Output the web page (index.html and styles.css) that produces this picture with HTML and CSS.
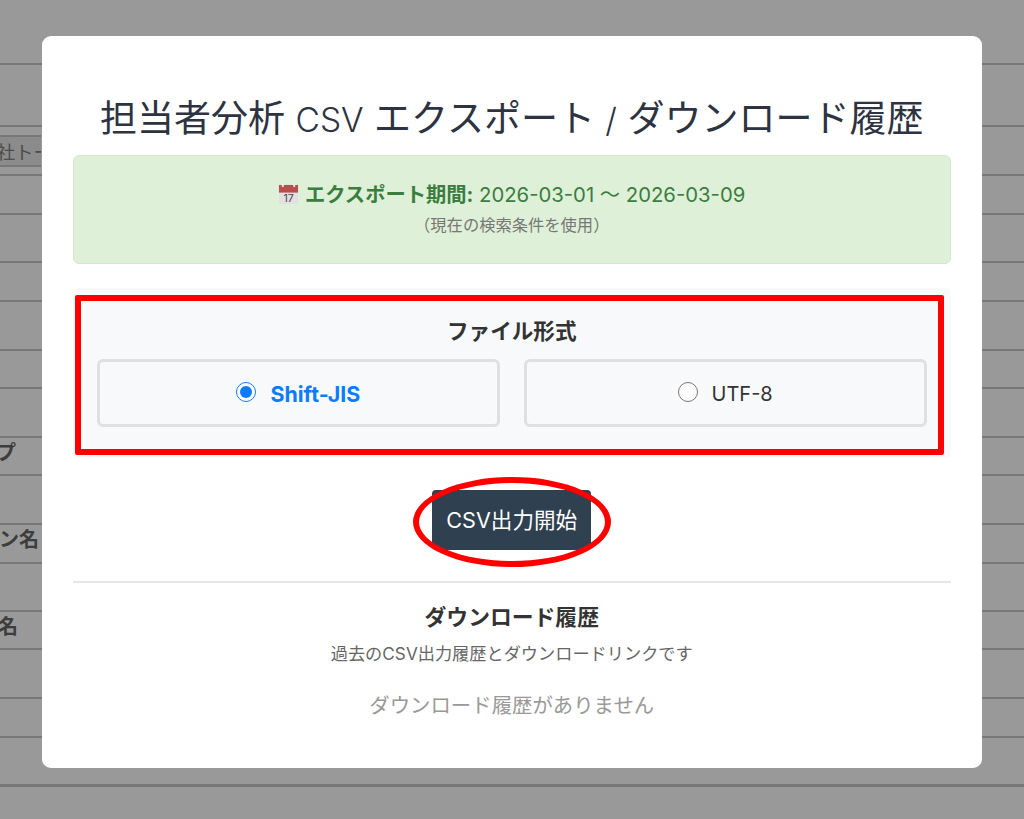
FILE: index.html
```html
<!DOCTYPE html>
<html lang="ja">
<head>
<meta charset="utf-8">
<title>担当者分析 CSV エクスポート</title>
<link rel="stylesheet" href="styles.css">
</head>
<body>
<main class="page">
  <div class="row h64"></div>
  <div class="row h62"></div>
  <div class="row h49"><div class="field"><span>社トー</span></div></div>
  <div class="row h39"></div>
  <div class="row h48"></div>
  <div class="row h39"></div>
  <div class="row h49"></div>
  <div class="row h38"></div>
  <div class="row h49"></div>
  <div class="row h38 label-row"><div class="label w15">プ</div></div>
  <div class="row h49"></div>
  <div class="row h39 label-row"><div class="label w38">ン名</div></div>
  <div class="row h48"></div>
  <div class="row h38 label-row"><div class="label w17">名</div></div>
  <div class="row h49"></div>
  <div class="row h39"></div>
  <div class="row h49 last"></div>
</main>
<div class="backdrop"></div>
<section class="modal">
  <h2 class="title">担当者分析 <span class="light">CSV</span> エクスポート <span class="light">/</span> ダウンロード履歴</h2>
  <div class="alert">
    <p class="period"><svg class="cal" viewBox="0 0 22 22" aria-hidden="true"><rect x="1" y="1" width="20" height="20" fill="#e2e0e0"/><rect x="1" y="1" width="20" height="8" fill="#b5504f"/><rect x="4" y="0" width="2" height="3" fill="#f4eeee"/><rect x="16" y="0" width="2" height="3" fill="#f4eeee"/><text x="11" y="19" class="cal-num" text-anchor="middle">17</text></svg> <strong>エクスポート期間:</strong> 2026-03-01 〜 2026-03-09</p>
    <p class="note">（現在の検索条件を使用）</p>
  </div>
  <div class="format">
    <h3 class="format-title">ファイル形式</h3>
    <div class="options">
      <label class="option selected"><input type="radio" name="enc" checked><span>Shift-JIS</span></label>
      <label class="option"><input type="radio" name="enc"><span>UTF-8</span></label>
    </div>
    <div class="mark-rect"></div>
  </div>
  <div class="action">
    <button class="start" type="button">CSV出力開始</button>
    <div class="mark-ellipse"></div>
  </div>
  <hr class="divider">
  <h3 class="history-title">ダウンロード履歴</h3>
  <p class="history-desc">過去のCSV出力履歴とダウンロードリンクです</p>
  <p class="history-empty">ダウンロード履歴がありません</p>
</section>
</body>
</html>
```

FILE: styles.css
```css
* { box-sizing: border-box; }
html, body { margin: 0; height: 100%; overflow: hidden; }
body {
  background: #fff;
  color: #2d3340;
  font-family: Inter, "Noto Sans CJK JP", sans-serif;
}
.row { border-bottom: 2px solid #c6c6c6; display: flex; align-items: center; }
.h64 { height: 65px; }
.h62 { height: 62px; }
.h49 { height: 49px; }
.h48 { height: 48px; }
.h39 { height: 39px; }
.h38 { height: 38px; }
.last { border-bottom-width: 3px; }
.field {
  width: 41px; height: 32px;
  display: flex; align-items: center; justify-content: flex-end;
  overflow: hidden;
  background: #e8e8e8;
  border-top: 2px solid #c6c6c6; border-bottom: 2px solid #c6c6c6;
  font-size: 18.5px; color: #808080;
  white-space: nowrap;
}
.field span { flex: none; margin-right: -11px; }
.label-row { font-size: 20px; font-weight: 700; color: #666; }
.label { display: flex; justify-content: flex-end; white-space: nowrap; margin-bottom: 10px; }
.w15 { width: 16px; }
.w38 { width: 39px; }
.w17 { width: 18px; }

.backdrop { position: fixed; inset: 0; background: rgba(0, 0, 0, .4); }
.modal {
  position: fixed;
  left: 41.5px; top: 36px; width: 940.5px; height: 732px;
  background: #fff;
  border-radius: 9px;
  padding: 58px 31.5px 0;
  text-align: center;
}
.title { height: 50px; margin: 0 0 11px; font-size: 37px; line-height: 50px; font-weight: 400; white-space: nowrap; }
.light { font-weight: 300; font-size: 33.5px; }
.alert {
  height: 109px;
  padding-top: 24px;
  background: #dff0d8;
  border: 1px solid #d0e9c6;
  border-radius: 6px;
  color: #3a7d3f;
}
.alert p { margin: 0; }
.period { font-size: 20.3px; line-height: 30px; }
.cal { width: 21px; height: 21px; vertical-align: -3px; }
.cal-num { font-size: 11px; fill: #444; font-family: Inter, sans-serif; }
.note { font-size: 16.3px; line-height: 30px; color: #777; }
.format {
  position: relative;
  height: 170px;
  margin-top: 24px;
  padding: 29px 24px 0;
  background: #f8f9fa;
  border-radius: 6px;
}
.format-title { margin: 0 0 14px; font-size: 21.6px; line-height: 28px; font-weight: 700; color: #333; }
.options { display: flex; gap: 24px; }
.option {
  flex: 1;
  height: 68px;
  display: flex; align-items: center; justify-content: center; gap: 14px;
  border: 3px solid #e0e0e0;
  border-radius: 6px;
  font-size: 20px;
  color: #333;
}
.option input { width: 20px; height: 20px; margin: 0 0 2px; accent-color: #0d7bff; }
.option span { margin-top: 2px; }
.selected { color: #0d7bff; font-weight: 700; font-size: 21.4px; }
.mark-rect {
  position: absolute;
  left: 2px; top: 7px; width: 869px; height: 160px;
  border: 6px solid #f00;
  border-radius: 2px;
}
.action { position: relative; margin-top: 32px; display: flex; justify-content: center; }
.start {
  width: 159px; height: 60px;
  padding: 0 0 4px;
  border: 0;
  border-radius: 4px;
  background: #2f4050;
  color: #fff;
  font: inherit;
  font-size: 21.6px;
  white-space: nowrap;
}
.mark-ellipse {
  position: absolute;
  left: 340px; top: -13px; width: 198px; height: 90px;
  border: 6px solid #f00;
  border-radius: 50%;
}
.divider { margin: 31px 0 0; border: 0; border-top: 2px solid #e6e6e6; }
.history-title { margin: 19px 0 0; font-size: 21.8px; line-height: 30px; font-weight: 700; color: #333; }
.history-desc { margin: 10px 0 0; font-size: 17.2px; line-height: 24px; color: #666; }
.history-empty { margin: 25px 0 0; font-size: 20.4px; line-height: 30px; color: #999; }
```
